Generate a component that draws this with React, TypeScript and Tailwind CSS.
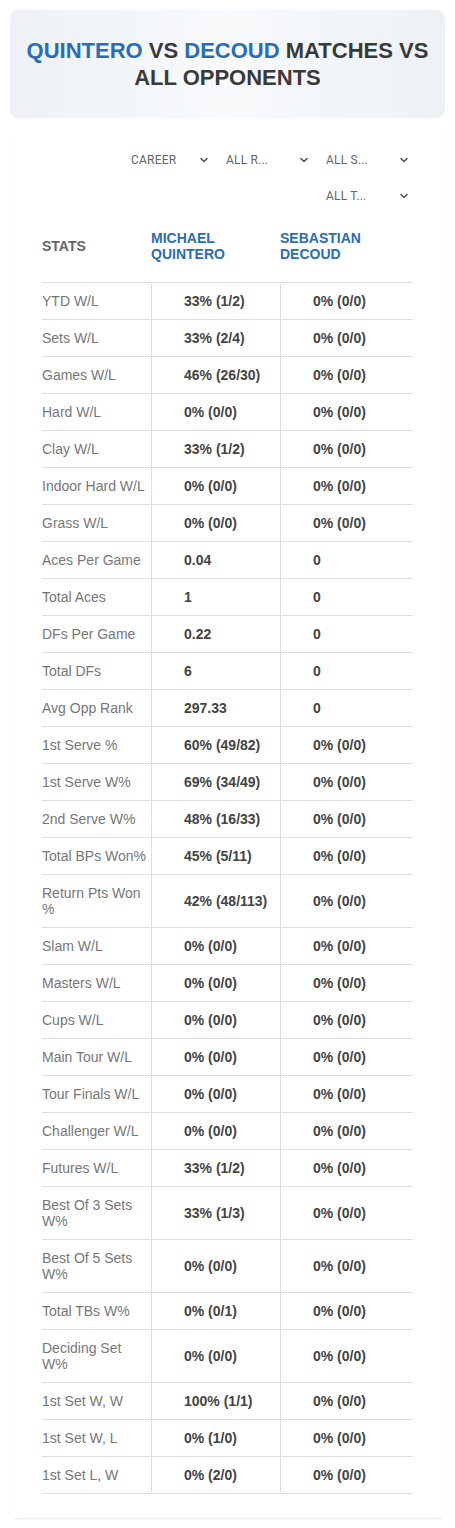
import { ChevronDown } from "lucide-react";

const rows: [string, string, string][] = [
	["YTD W/L", "33% (1/2)", "0% (0/0)"],
	["Sets W/L", "33% (2/4)", "0% (0/0)"],
	["Games W/L", "46% (26/30)", "0% (0/0)"],
	["Hard W/L", "0% (0/0)", "0% (0/0)"],
	["Clay W/L", "33% (1/2)", "0% (0/0)"],
	["Indoor Hard W/L", "0% (0/0)", "0% (0/0)"],
	["Grass W/L", "0% (0/0)", "0% (0/0)"],
	["Aces Per Game", "0.04", "0"],
	["Total Aces", "1", "0"],
	["DFs Per Game", "0.22", "0"],
	["Total DFs", "6", "0"],
	["Avg Opp Rank", "297.33", "0"],
	["1st Serve %", "60% (49/82)", "0% (0/0)"],
	["1st Serve W%", "69% (34/49)", "0% (0/0)"],
	["2nd Serve W%", "48% (16/33)", "0% (0/0)"],
	["Total BPs Won%", "45% (5/11)", "0% (0/0)"],
	["Return Pts Won %", "42% (48/113)", "0% (0/0)"],
	["Slam W/L", "0% (0/0)", "0% (0/0)"],
	["Masters W/L", "0% (0/0)", "0% (0/0)"],
	["Cups W/L", "0% (0/0)", "0% (0/0)"],
	["Main Tour W/L", "0% (0/0)", "0% (0/0)"],
	["Tour Finals W/L", "0% (0/0)", "0% (0/0)"],
	["Challenger W/L", "0% (0/0)", "0% (0/0)"],
	["Futures W/L", "33% (1/2)", "0% (0/0)"],
	["Best Of 3 Sets W%", "33% (1/3)", "0% (0/0)"],
	["Best Of 5 Sets W%", "0% (0/0)", "0% (0/0)"],
	["Total TBs W%", "0% (0/1)", "0% (0/0)"],
	["Deciding Set W%", "0% (0/0)", "0% (0/0)"],
	["1st Set W, W", "100% (1/1)", "0% (0/0)"],
	["1st Set W, L", "0% (1/0)", "0% (0/0)"],
	["1st Set L, W", "0% (2/0)", "0% (0/0)"],
];

function Filter({ label, first }: { label: string; first?: boolean }) {
	return (
		<div className={`w-[90px] h-6 flex items-center justify-between pr-[3px] ${first ? "pl-2" : "pl-[3px]"}`}>
			<span className="text-[12px] text-[#666] tracking-[0.2px]">{label}</span>
			<ChevronDown size={12} strokeWidth={3.2} className="text-[#555]" />
		</div>
	);
}

export default function App() {
	return (
		<div className="p-[10px] bg-white [font-family:'Liberation_Sans',Arial,sans-serif]">
			<header className="h-[108px] rounded-lg bg-gradient-to-r from-[#edf1f5] via-[#f8fafc] to-[#edf1f5] flex items-center justify-center px-4">
				<h1 className="text-center text-[22px] leading-[27px] font-bold text-[#3a3a3a] -mt-[1px]">
					<span className="text-[#2a6db2]">QUINTERO</span> VS <span className="text-[#2a6db2]">DECOUD</span> MATCHES VS
					<br />
					ALL OPPONENTS
				</h1>
			</header>

			<section className="mt-3 rounded-lg bg-white shadow-[0_1px_2px_rgba(0,0,0,0.08)] pt-[18px] pb-[24px]">
				<div className="ml-auto w-[300px] mr-[32px] flex flex-wrap justify-end gap-x-[10px] gap-y-3 [font-family:Roboto,sans-serif]">
					<Filter label="CAREER" first />
					<Filter label="ALL R..." />
					<Filter label="ALL S..." />
					<Filter label="ALL T..." />
				</div>

				<div className="mx-[32px] mt-[14px]">
					<div className="grid grid-cols-[109px_129px_133px] h-[61px] pb-3 items-center border-b border-[#dedede] text-[14px] leading-[16px] font-bold">
						<span className="text-[#666]">STATS</span>
						<span className="text-[#2a6db2]">
							MICHAEL
							<br />
							QUINTERO
						</span>
						<span className="text-[#2a6db2]">
							SEBASTIAN
							<br />
							DECOUD
						</span>
					</div>
					{rows.map(([label, a, b]) => (
						<div key={label} className="grid grid-cols-[109px_129px_133px] border-b border-[#dedede] text-[14px] leading-[16px]">
							<div className="py-[10px] pr-[4px] text-[#777]">{label}</div>
							<div className="py-[10px] pl-[32px] border-l border-[#dedede] font-bold text-[#444] flex items-center">{a}</div>
							<div className="py-[10px] pl-[32px] border-l border-[#dedede] font-bold text-[#444] flex items-center">{b}</div>
						</div>
					))}
				</div>
			</section>
		</div>
	);
}
